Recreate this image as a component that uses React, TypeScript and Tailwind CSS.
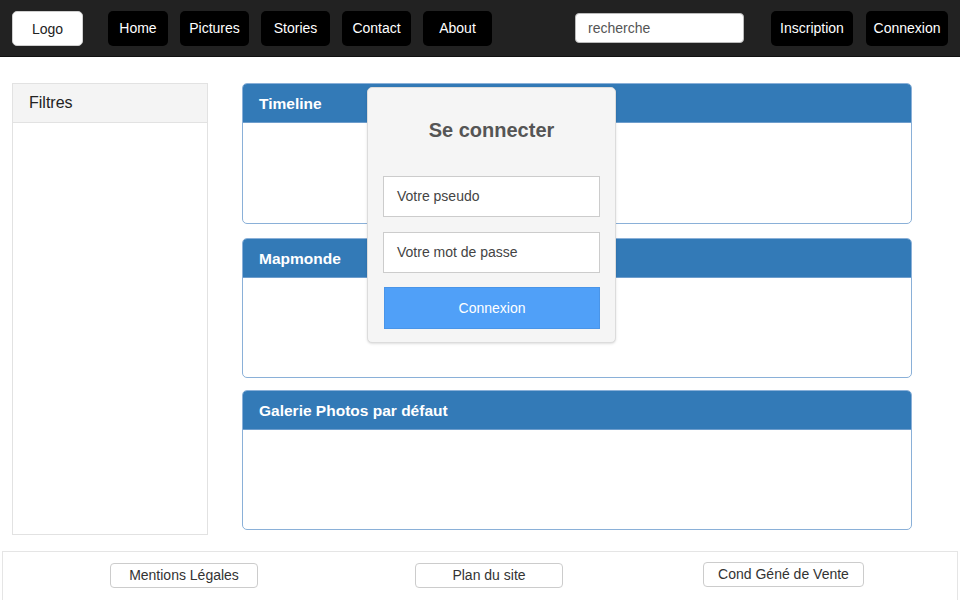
const navItems = [
  { label: "Home", w: "w-[60px]" },
  { label: "Pictures", w: "w-[69px]" },
  { label: "Stories", w: "w-[69px]" },
  { label: "Contact", w: "w-[69px]" },
  { label: "About", w: "w-[69px]" },
];

function Header() {
  return (
    <header className="h-[57px] bg-[#222222] border-b border-[#111111] flex items-center px-3">
      <button className="w-[71px] h-[35px] bg-white border border-[#cfcfcf] rounded-[5px] text-[14px] text-[#222] pt-[2px]">
        Logo
      </button>
      <nav className="ml-[25px] flex gap-3">
        {navItems.map((item) => (
          <button
            key={item.label}
            className={`${item.w} h-[35px] bg-black rounded-[5px] text-[14px] text-white`}
          >
            {item.label}
          </button>
        ))}
      </nav>
      <div className="ml-auto flex items-center">
        <div className="w-[169px] h-[30px] bg-white border border-[#bbbbbb] rounded-[4px] flex items-center px-3 text-[14px] text-[#555]">
          recherche
        </div>
        <button className="ml-[27px] w-[82px] h-[35px] bg-black rounded-[5px] text-[14px] text-white">
          Inscription
        </button>
        <button className="ml-[13px] w-[82px] h-[35px] bg-black rounded-[5px] text-[14px] text-white">
          Connexion
        </button>
      </div>
    </header>
  );
}

function Panel({ title, h }: { title: string; h: string }) {
  return (
    <section className={`${h} border border-[#8ab0d8] rounded-[5px] overflow-hidden bg-white flex flex-col`}>
      <div className="h-[39px] bg-[#337ab7] border-b border-[#6e9dcc] flex items-center px-4">
        <h2 className="text-[15.5px] font-bold text-white pt-px">{title}</h2>
      </div>
      <div className="flex-1" />
    </section>
  );
}

function LoginModal() {
  return (
    <div className="absolute left-[367px] top-[87px] w-[249px] h-[256px] bg-[#f5f5f5] border border-[#dcdcdc] rounded-[5px] shadow-sm px-[15px] flex flex-col">
      <h3 className="mt-[27px] h-[30px] leading-[30px] text-center text-[20px] font-bold text-[#555]">Se connecter</h3>
      <div className="mt-[31px] h-[41px] bg-white border border-[#cccccc] flex items-center px-[13px] text-[14px] text-[#444]">
        Votre pseudo
      </div>
      <div className="mt-[15px] h-[41px] bg-white border border-[#cccccc] flex items-center px-[13px] text-[14px] text-[#444]">
        Votre mot de passe
      </div>
      <button className="mt-[14px] ml-px h-[42px] bg-[#50a0f8] border border-[#4a95e8] text-[14px] text-white">
        Connexion
      </button>
    </div>
  );
}

function Footer() {
  return (
    <footer className="mt-4 mx-[2px] h-[52px] border border-[#e5e5e5] flex items-start pt-[11px] text-[14px] text-[#333]">
      <button className="ml-[107px] w-[148px] h-[25px] bg-white border border-[#cccccc] rounded-[4px]">
        Mentions Légales
      </button>
      <button className="ml-[157px] w-[148px] h-[25px] bg-white border border-[#cccccc] rounded-[4px]">
        Plan du site
      </button>
      <button className="ml-[140px] -mt-px w-[161px] h-[25px] bg-white border border-[#cccccc] rounded-[4px]">
        Cond Géné de Vente
      </button>
    </footer>
  );
}

export default function App() {
  return (
    <div className="relative w-[960px] h-[600px] overflow-hidden bg-white font-['Liberation_Sans',Arial,sans-serif]">
      <Header />
      <main className="flex px-3 pt-[26px] gap-[34px]">
        <aside className="w-[196px] h-[452px] border border-[#e2e2e2] flex flex-col">
          <div className="h-[39px] bg-[#f4f4f4] border-b border-[#e2e2e2] flex items-center px-4">
            <h2 className="text-[16px] text-[#222]">Filtres</h2>
          </div>
        </aside>
        <div className="w-[670px] flex flex-col">
          <Panel title="Timeline" h="h-[141px]" />
          <div className="mt-[14px]">
            <Panel title="Mapmonde" h="h-[140px]" />
          </div>
          <div className="mt-3">
            <Panel title="Galerie Photos par défaut" h="h-[140px]" />
          </div>
        </div>
      </main>
      <Footer />
      <LoginModal />
    </div>
  );
}
